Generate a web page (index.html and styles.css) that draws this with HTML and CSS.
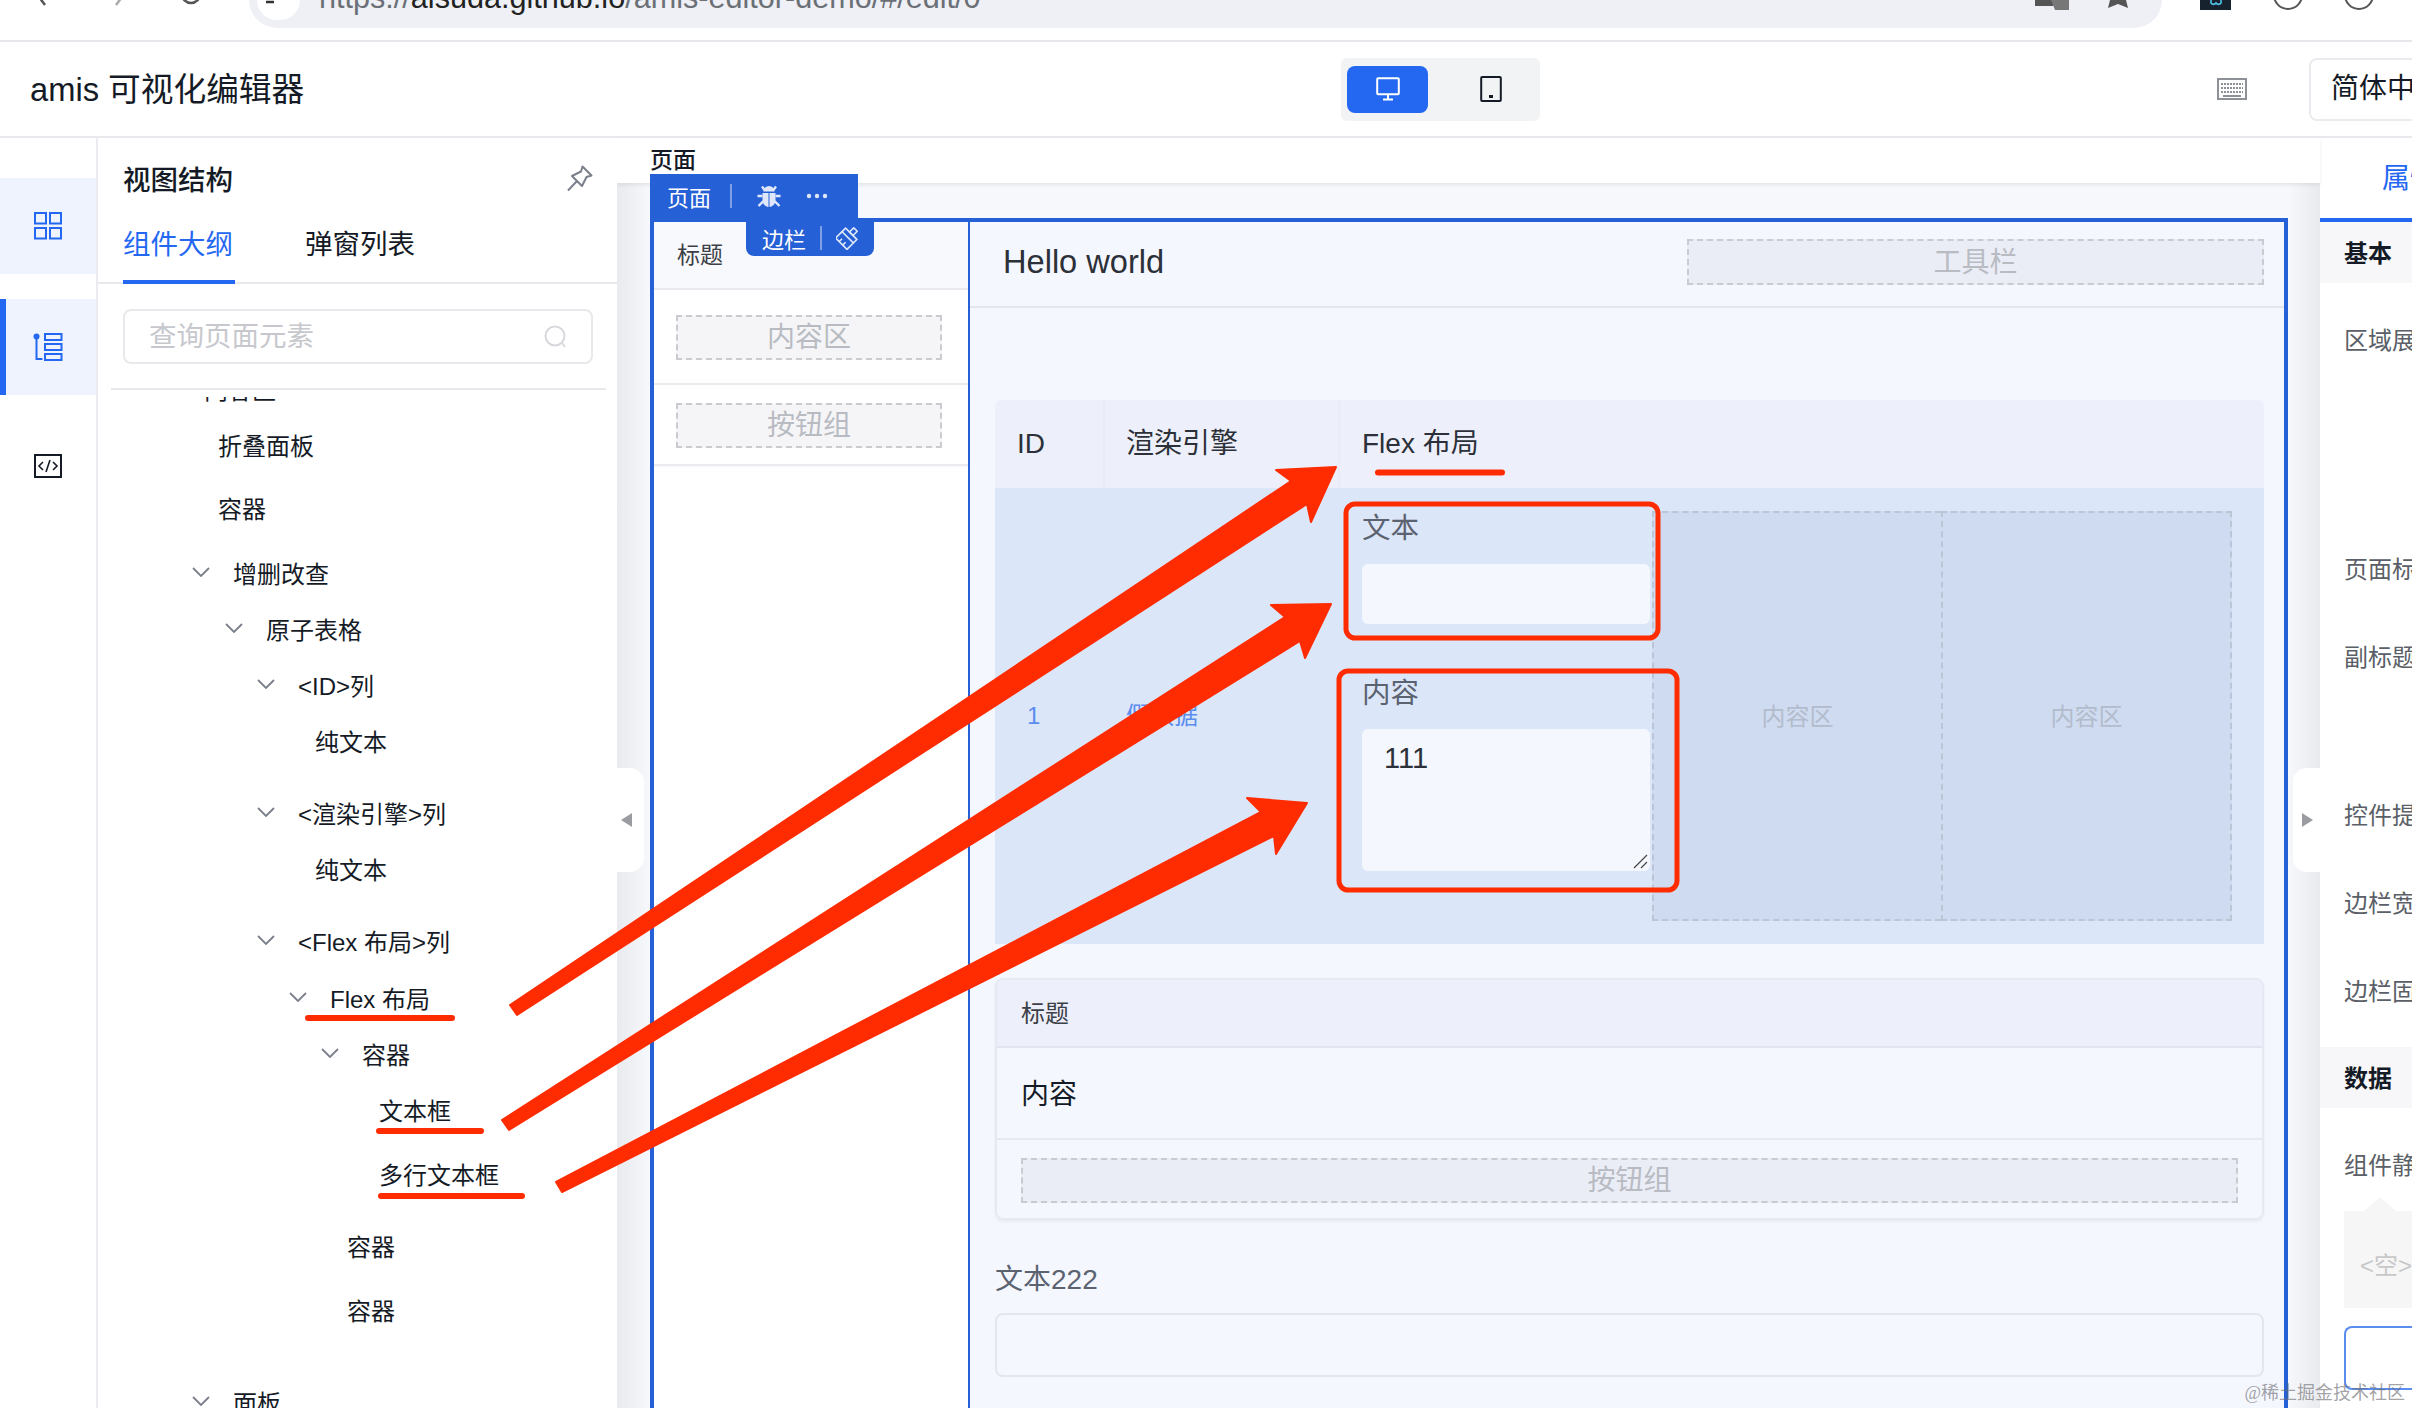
FILE: index.html
```html
<!DOCTYPE html>
<html lang="zh-CN">
<head>
<meta charset="utf-8">
<title>amis 可视化编辑器</title>
<link rel="stylesheet" href="styles.css">
</head>
<body>
<div class="browser">
  <svg class="b-back" width="10" height="6" viewBox="0 0 10 6"><path d="M2 -3L8 5" fill="none" stroke="#555" stroke-width="2.5"/></svg>
  <svg class="b-fwd" width="10" height="6" viewBox="0 0 10 6"><path d="M8 -3L2 5" fill="none" stroke="#aaa" stroke-width="2.5"/></svg>
  <svg class="b-reload" width="22" height="7" viewBox="0 0 22 7"><path d="M2 -6a9 9 0 0 0 18 0" fill="none" stroke="#555" stroke-width="2.5"/></svg>
  <div class="address">
    <div class="addr-lock"><svg width="24" height="8" viewBox="0 0 24 8"><path d="M0 2h8M14 -4a5 7 0 0 0 8 0" fill="none" stroke="#333" stroke-width="2.5"/></svg></div>
    <div class="url">https://<b>aisuda.github.io</b>/amis-editor-demo/#/edit/0</div>
    <svg class="addr-translate" width="34" height="11" viewBox="0 0 34 11"><path d="M0 0h18v6H0z" fill="#555"/><path d="M16 0h18v10H20z" fill="#777"/></svg>
    <svg class="addr-star" width="22" height="9" viewBox="0 0 22 9"><path d="M3 0l-2 8 10-4 10 4-2-8z" fill="#555"/></svg>
  </div>
  <div class="b-ext"><svg width="20" height="10" viewBox="0 0 20 10"><path d="M5 0v3a3 3 0 0 0 5 0 3 3 0 0 0 5 0V0" fill="none" stroke="#4fc3e8" stroke-width="1.6"/></svg></div>
  <svg class="b-circle b-circle-a" width="32" height="11" viewBox="0 0 32 11"><circle cx="16" cy="-5" r="14" fill="#fff" stroke="#555" stroke-width="2"/></svg>
  <svg class="b-circle b-circle-b" width="32" height="11" viewBox="0 0 32 11"><circle cx="16" cy="-5" r="14" fill="#fff" stroke="#555" stroke-width="2"/></svg>
</div>

<header class="hdr">
  <div class="hdr-title">amis 可视化编辑器</div>
  <div class="device">
    <div class="device-btn device-on">
      <svg width="24" height="24" viewBox="0 0 24 24"><rect x="1.2" y="1.2" width="21.6" height="16" rx="1" fill="none" stroke="#fff" stroke-width="2"/><path d="M12 17v5M7 22.5h10" stroke="#fff" stroke-width="2"/></svg>
    </div>
    <div class="device-btn">
      <svg width="22" height="26" viewBox="0 0 22 26"><rect x="1.2" y="1" width="19.6" height="24" rx="1" fill="none" stroke="#151b26" stroke-width="2"/><rect x="9" y="19" width="4" height="3" fill="#151b26"/></svg>
    </div>
  </div>
  <svg class="kbd" width="30" height="22" viewBox="0 0 30 22"><rect x="1" y="1" width="28" height="20" fill="none" stroke="#8d9097" stroke-width="2"/><path d="M4 6h22M4 10h22M4 14h22" stroke="#8d9097" stroke-width="2" stroke-dasharray="2 1"/><path d="M6 18h18" stroke="#8d9097" stroke-width="2"/></svg>
  <div class="lang">简体中文</div>
</header>

<div class="work">
  <nav class="rail">
    <div class="rail-item rail-on rail-first">
      <svg width="28" height="28" viewBox="0 0 28 28"><g fill="none" stroke="#2468f2" stroke-width="2"><rect x="1" y="1" width="11" height="10.5"/><rect x="16" y="1" width="11" height="10.5"/><rect x="1" y="16" width="11" height="10.5"/><rect x="16" y="16" width="11" height="10.5"/></g></svg>
    </div>
    <div class="rail-item rail-on rail-bar">
      <svg width="30" height="28" viewBox="0 0 30 28"><circle cx="3.5" cy="3.5" r="3" fill="#2468f2"/><g fill="none" stroke="#2468f2" stroke-width="2"><path d="M3.5 5v21h6"/><rect x="12" y="1" width="16.5" height="6"/><rect x="12" y="11" width="16.5" height="6"/><rect x="12" y="21" width="16.5" height="6"/></g></svg>
    </div>
    <div class="rail-item rail-code">
      <svg width="28" height="24" viewBox="0 0 28 24"><g fill="none" stroke="#151b26" stroke-width="2"><rect x="1" y="1" width="26" height="22"/><path d="M9 8l-4 4 4 4M19 8l4 4-4 4M16 6l-4 12" stroke-width="1.6"/></g></svg>
    </div>
  </nav>

  <aside class="outline">
    <div class="outline-head">
      <div class="outline-title">视图结构</div>
      <svg class="pin" width="27" height="27" viewBox="0 0 27 27"><g fill="none" stroke="#7a7f8a" stroke-width="2" stroke-linejoin="round"><path d="M16.500 1.500L25.500 10.500 20.500 12 16 21 6 11 15 6.500z"/><path d="M11 16L2 25.500"/></g></svg>
    </div>
    <div class="tabs">
      <div class="tab tab-on">组件大纲</div>
      <div class="tab tab-off">弹窗列表</div>
    </div>
    <div class="search">
      <input class="search-input" placeholder="查询页面元素">
      <svg width="26" height="26" viewBox="0 0 26 26"><circle cx="12" cy="12" r="9.500" fill="none" stroke="#d6d8dc" stroke-width="2"/><path d="M19 19l3 4" stroke="#d6d8dc" stroke-width="2"/></svg>
    </div>
    <div class="tree-wrap">
      <div class="tree">
        <div class="row p93 r-first">内容区</div>
        <div class="row p107">折叠面板</div>
        <div class="row p107 m7">容器</div>
        <div class="row p81 m9"><svg class="chev" width="18" height="10" viewBox="0 0 18 10"><path d="M1 1l8 8 8-8"/></svg>增删改查</div>
        <div class="row p114"><svg class="chev" width="18" height="10" viewBox="0 0 18 10"><path d="M1 1l8 8 8-8"/></svg>原子表格</div>
        <div class="row p146"><svg class="chev" width="18" height="10" viewBox="0 0 18 10"><path d="M1 1l8 8 8-8"/></svg>&lt;ID&gt;列</div>
        <div class="row p204">纯文本</div>
        <div class="row p146 m16"><svg class="chev" width="18" height="10" viewBox="0 0 18 10"><path d="M1 1l8 8 8-8"/></svg>&lt;渲染引擎&gt;列</div>
        <div class="row p204">纯文本</div>
        <div class="row p146 m16"><svg class="chev" width="18" height="10" viewBox="0 0 18 10"><path d="M1 1l8 8 8-8"/></svg>&lt;Flex 布局&gt;列</div>
        <div class="row p178 m1"><svg class="chev" width="18" height="10" viewBox="0 0 18 10"><path d="M1 1l8 8 8-8"/></svg>Flex 布局</div>
        <div class="row p210"><svg class="chev" width="18" height="10" viewBox="0 0 18 10"><path d="M1 1l8 8 8-8"/></svg>容器</div>
        <div class="row p268">文本框</div>
        <div class="row p268 m8">多行文本框</div>
        <div class="row p236 m16">容器</div>
        <div class="row p236 m8">容器</div>
        <div class="row p81 m36"><svg class="chev" width="18" height="10" viewBox="0 0 18 10"><path d="M1 1l8 8 8-8"/></svg>面板</div>
      </div>
    </div>
    <div class="handle handle-left"><span class="tri tri-left"></span></div>
  </aside>

  <main class="canvas">
    <div class="crumb">页面</div>
    <div class="stage">
      <div class="frame">
        <div class="tool tool-page">
          <span>页面</span><i class="tool-sep"></i>
          <svg class="tool-bug" width="24" height="24" viewBox="0 0 24 24" fill="#dfe8fb"><path d="M6.500 7.500a5.500 5.500 0 0 1 11 0z"/><path d="M5.500 9h6v14C8 22.500 5.500 20 5.500 15.500zM18.500 9h-6v14c3.500-.5 6-3 6-7.500z"/><path d="M5 2.500l3 4M19 2.500l-3 4M0.500 12h5M23.500 12h-5M1.500 22l5-5M22.500 22l-5-5" stroke="#dfe8fb" stroke-width="2.400"/></svg>
          <svg class="tool-dots" width="22" height="6" viewBox="0 0 22 6" fill="#dfe8fb"><circle cx="3" cy="3" r="2.200"/><circle cx="11" cy="3" r="2.200"/><circle cx="19" cy="3" r="2.200"/></svg>
        </div>
        <div class="tool tool-side">
          <span>边栏</span><i class="tool-sep tool-sep-b"></i>
          <svg width="22" height="24" viewBox="0 0 22 24" fill="none" stroke="#dfe8fb" stroke-width="1.600" stroke-linejoin="round"><g transform="rotate(45 11 12)"><rect x="8.500" y="0" width="5" height="6"/><rect x="3" y="6" width="16" height="5"/><path d="M3 11v9h16v-9M8 20v-4M13 20v-4"/></g></svg>
        </div>

        <section class="side">
          <div class="side-head">标题</div>
          <div class="side-block"><div class="ph">内容区</div></div>
          <div class="side-block side-foot"><div class="ph">按钮组</div></div>
        </section>

        <section class="page">
          <div class="page-head">
            <div class="page-title">Hello world</div>
            <div class="ph ph-toolbar">工具栏</div>
          </div>
          <div class="page-body">
            <div class="tbl-head">
              <div class="th">ID</div>
              <div class="th">渲染引擎</div>
              <div class="th">Flex 布局</div>
            </div>
            <div class="tbl-row">
              <div class="td td-link">1</div>
              <div class="td td-link">假数据</div>
              <div class="flex-cell">
                <div class="form-col">
                  <div class="lbl">文本</div>
                  <input class="field field-gap">
                  <div class="lbl">内容</div>
                  <div class="area">111
                    <svg class="grip" width="16" height="16" viewBox="0 0 16 16"><path d="M15 2L2 15M15 9l-6 6" stroke="#444" stroke-width="1.200"/></svg>
                  </div>
                </div>
                <div class="cont">内容区</div>
                <div class="cont cont-b">内容区</div>
              </div>
            </div>
            <div class="panel">
              <div class="panel-head">标题</div>
              <div class="panel-body">内容</div>
              <div class="panel-foot"><div class="ph">按钮组</div></div>
            </div>
            <div class="lbl lbl-222">文本222</div>
            <input class="field field-222">
          </div>
        </section>
      </div>
    </div>
    <div class="handle handle-right"><span class="tri tri-right"></span></div>
  </main>

  <aside class="props">
    <div class="props-tab">属性</div>
    <div class="sec">基本</div>
    <div class="pf pf-34">区域展示</div>
    <div class="pf pf-183">页面标题</div>
    <div class="pf pf-42">副标题</div>
    <div class="pf pf-112">控件提示</div>
    <div class="pf pf-42">边栏宽度</div>
    <div class="pf pf-42">边栏固定</div>
    <div class="sec sec-data">数据</div>
    <div class="pf pf-34">组件静态数据</div>
    <div class="empty">&lt;空&gt;</div>
    <div class="add-btn"></div>
  </aside>
</div>

<svg class="marks" width="2412" height="1408" viewBox="0 0 2412 1408">
  <g fill="none" stroke="#fe2c00" stroke-linecap="round">
    <path d="M308 1018H452M379 1131H481M381 1196H522M1378 472.500H1502" stroke-width="6"/>
    <rect x="1346" y="504" width="312" height="134" rx="9" stroke-width="5"/>
    <rect x="1339" y="671" width="338" height="219" rx="9" stroke-width="5"/>
  </g>
  <g fill="#fe2c00" stroke="#fe2c00" stroke-width="2" stroke-linejoin="round">
    <polygon points="510,1005 1291,481 1276,470 1336,467 1311,522 1307,504 517,1015"/>
    <polygon points="502,1120 1285,617 1271,605 1331,604 1305,658 1300,641 509,1130"/>
    <polygon points="556,1182 1261,812 1247,798 1307,803 1276,854 1274,836 562,1192"/>
  </g>
</svg>
<div class="watermark">@稀土掘金技术社区</div>
</body>
</html>
```
FILE: styles.css
```css
* { box-sizing: border-box; }
html, body { margin: 0; height: 1408px; overflow: hidden; }
body {
  position: relative;
  background: #fff;
  color: #151b26;
  font-family: "Liberation Sans", "Noto Sans CJK SC", sans-serif;
  font-size: 24px;
}

/* browser chrome */
.browser { height: 42px; display: flex; align-items: flex-start; border-bottom: 2px solid #e6e7ea; }
.browser svg { display: block; flex: none; }
.b-back { margin-left: 37px; }
.b-fwd { margin-left: 67px; }
.b-reload { margin-left: 56px; }
.address { margin-left: 47px; width: 1913px; height: 28px; background: #eef0f5; border-radius: 0 0 28px 28px; display: flex; align-items: flex-start; overflow: hidden; }
.addr-lock { margin-left: 8px; width: 43px; height: 20px; background: #fff; border-radius: 0 0 20px 20px; padding-left: 9px; flex: none; }
.url { margin: -17px 0 0 19px; font-size: 30.600px; line-height: 28px; color: #6b6f76; white-space: nowrap; width: 1478px; }
.url b { font-weight: 400; color: #222; }
.addr-translate { margin-left: 238px; }
.addr-star { margin-left: 38px; }
.b-ext { margin-left: 38px; width: 31px; height: 10px; background: #16222e; display: flex; justify-content: center; flex: none; }
.b-circle-a { margin-left: 41px; }
.b-circle-b { margin-left: 39px; }

/* editor header */
.hdr { height: 96px; display: flex; align-items: center; border-bottom: 2px solid #e8e9ec; }
.hdr-title { flex: 0 0 1341px; padding: 0 0 6px 30px; font-size: 32.700px; }
.device { width: 199px; height: 63px; background: #f2f3f5; border-radius: 6px; padding: 8px 6px; display: flex; gap: 22px; }
.device-btn { width: 81px; height: 47px; border-radius: 8px; display: flex; align-items: center; justify-content: center; }
.device-on { background: #2468f2; }
.kbd { margin-left: 677px; flex: none; }
.lang { margin-left: 62px; flex: 1; height: 63px; min-width: 0; overflow: hidden; white-space: nowrap; border: 2px solid #eaebee; border-right: 0; border-radius: 8px 0 0 8px; padding-left: 20px; font-size: 28px; line-height: 58px; }

/* three columns */
.work { display: flex; height: 1270px; }
.rail { flex: 0 0 98px; border-right: 2px solid #ececf0; }
.rail-item { height: 96px; display: flex; align-items: center; justify-content: center; margin-top: 25px; }
.rail-first { margin-top: 40px; }
.rail-code { margin-top: 23px; }
.rail-on { background: #eef3fe; }
.rail-bar { border-left: 6px solid #2468f2; padding-right: 6px; }

.outline { flex: 0 0 519px; position: relative; z-index: 2; background: #fff; }
.outline-head { height: 77px; padding: 26px 24px 0 25px; display: flex; justify-content: space-between; align-items: flex-start; }
.pin { margin-top: 1px; }
.outline-title { font-size: 27.500px; font-weight: 500; line-height: 34px; }
.tabs { height: 69px; padding-left: 25px; display: flex; gap: 70px; border-bottom: 2px solid #e8e9ec; }
.tab { width: 112px; font-size: 27.500px; line-height: 60px; white-space: nowrap; height: 69px; }
.tab-on { color: #2468f2; border-bottom: 4px solid #2468f2; }
.search { margin: 25px 24px 0 25px; height: 55px; border: 2px solid #e8e9ec; border-radius: 8px; display: flex; align-items: center; padding: 0 22px 0 24px; }
.search-input { flex: 1; min-width: 0; border: 0; outline: 0; padding: 0; background: none; font: inherit; font-size: 27.500px; }
.search-input::placeholder { color: #c6c8cd; }
.tree-wrap { margin: 24px 11px 0 13px; border-top: 2px solid #e8e9ec; }
.tree { margin-top: 7px; height: 1011px; overflow: hidden; font-size: 24px; white-space: nowrap; }
.row { height: 56px; display: flex; align-items: center; }
.r-first { margin-top: -37px; }
.chev { margin-right: 23px; flex: none; }
.chev path { fill: none; stroke: #7a7f8a; stroke-width: 1.800; }
.p81 { padding-left: 81px; } .p93 { padding-left: 93px; } .p107 { padding-left: 107px; } .p114 { padding-left: 114px; }
.p146 { padding-left: 146px; } .p178 { padding-left: 178px; } .p204 { padding-left: 204px; }
.p210 { padding-left: 210px; } .p236 { padding-left: 236px; } .p268 { padding-left: 268px; }
.m1 { margin-top: 1px; } .m7 { margin-top: 7px; } .m8 { margin-top: 8px; } .m9 { margin-top: 9px; }
.m16 { margin-top: 16px; } .m36 { margin-top: 36px; }

.handle { position: absolute; top: 630px; width: 27px; height: 104px; background: #fff; display: flex; align-items: center; justify-content: center; z-index: 3; }
.handle-left { left: 519px; border-radius: 0 14px 14px 0; padding-right: 9px; }
.handle-right { right: 0; border-radius: 14px 0 0 14px; padding-left: 2px; }
.tri { width: 0; height: 0; border-style: solid; border-color: transparent; }
.tri-left { border-width: 7px 11px 7px 0; border-right-color: #9a9ca1; }
.tri-right { border-width: 7px 0 7px 11px; border-left-color: #9a9ca1; }

/* canvas */
.canvas { flex: 0 0 1703px; position: relative; display: flex; flex-direction: column; min-width: 0; }
.crumb { height: 45px; background: #fff; padding: 9px 0 0 33px; font-size: 23px; line-height: 26px; font-weight: 500; box-shadow: 0 2px 4px rgba(0,0,0,.08); position: relative; }
.stage { flex: 1; min-height: 0; padding: 35px 32px 0 33px; background: linear-gradient(to right, #e9eaee 0, #f7f8fb 33px, #f7f8fb calc(100% - 32px), #e9eaee 100%); }
.frame { position: relative; height: 100%; display: flex; border: 4px solid #2660d6; border-bottom: 0; }

.tool { position: absolute; z-index: 4; background: #2660d6; color: #fff; font-size: 22px; display: flex; align-items: center; }
.tool-page { left: -4px; top: -48px; width: 208px; height: 44px; padding-left: 17px; }
.tool-side { left: 92px; top: 0; width: 128px; height: 34px; padding: 0 0 3px 16px; border-radius: 0 0 8px 8px; }
.tool-sep { width: 2px; height: 24px; background: #7ea0e6; margin: 0 25px 0 19px; flex: none; }
.tool-sep-b { margin: 0 14px; }
.tool-dots { margin-left: 25px; }

.side { flex: 0 0 316px; background: #fff; border-right: 2px solid #2660d6; }
.side-head { height: 68px; padding-left: 23px; background: #f8f9fc; border-bottom: 2px solid #e9ebef; line-height: 66px; color: #3c4048; font-size: 23px; }
.side-block { height: 95px; padding: 25px 26px 0 22px; border-bottom: 2px solid #e9ebef; }
.side-foot { height: 81px; padding-top: 18px; box-shadow: 0 1px 2px rgba(0,0,0,.04); }
.ph { height: 45px; border: 2px dashed #c9cbd1; background: rgba(20,30,60,.045); color: #b8bbc2; font-size: 28px; line-height: 42px; text-align: center; }

.page { flex: 1; min-width: 0; background: #f5f7fe; }
.page-head { height: 86px; padding: 17px 20px 0 33px; display: flex; justify-content: space-between; border-bottom: 2px solid #e4e6ec; }
.page-title { font-size: 32.600px; line-height: 46px; color: #2c3038; }
.ph-toolbar { width: 577px; height: 46px; line-height: 44px; }
.page-body { padding: 92px 20px 0 25px; }

.tbl-head { height: 88px; background: #edf0fa; display: grid; grid-template-columns: 108px 235px 1fr; border-radius: 6px 6px 0 0; }
.th { font-size: 28px; line-height: 88px; padding-left: 21px; color: #2c3038; }
.th:first-child { padding-left: 22px; }
.th:last-child { padding-left: 22px; }
.th + .th { border-left: 2px solid #e9ecf6; }
.tbl-row { height: 456px; background: #dce6f9; display: grid; grid-template-columns: 108px 235px 1fr; }
.td { font-size: 24px; padding-left: 32px; line-height: 456px; }
.td-link { color: #5b8def; }
.td-link + .td-link { padding-left: 23px; }
.flex-cell { display: flex; padding: 23px 32px 23px 24px; }
.form-col { flex: 0 0 290px; }
.lbl { height: 34px; font-size: 28.500px; line-height: 34px; color: #5b6270; }
.field { display: block; width: 288px; height: 60px; margin-top: 19px; border: 0; outline: 0; padding: 0; border-radius: 6px; background: #f5f7fe; }
.field-gap { margin-bottom: 52px; }
.area { position: relative; width: 288px; height: 142px; margin-top: 19px; border-radius: 6px; background: #f5f7fe; padding: 12px 22px; font-size: 29px; line-height: 34px; color: #2c3038; }
.grip { position: absolute; right: 2px; bottom: 2px; }
.cont { flex: 1; display: flex; align-items: center; justify-content: center; padding-bottom: 4px; background: #cfdbf0; border: 2px dashed #bcc5d6; border-right: 0; color: #b3bccc; font-size: 24px; }
.cont-b { border-right: 2px dashed #bcc5d6; }

.panel { margin-top: 34px; height: 242px; border: 2px solid #e6e9f1; border-radius: 8px; box-shadow: 0 2px 3px rgba(0,0,0,.05); overflow: hidden; }
.panel-head { height: 68px; background: #edf0fa; border-bottom: 2px solid #e2e5ee; padding-left: 24px; line-height: 68px; color: #3c4048; font-size: 24px; }
.panel-body { height: 92px; padding-left: 24px; font-size: 28px; line-height: 94px; border-bottom: 2px solid #e6e9f1; }
.panel-foot { padding: 18px 24px 0; }
.lbl-222 { margin-top: 43px; font-size: 28px; }
.field-222 { width: 100%; height: 64px; background: transparent; border: 2px solid #e4e6ee; border-radius: 8px; margin-top: 16px; }

/* right panel */
.props { flex: 1; min-width: 0; overflow: hidden; white-space: nowrap; background: #fff; font-size: 24px; }
.props-tab { height: 84px; padding: 23px 0 0 62px; border-bottom: 4px solid #2468f2; color: #2468f2; font-size: 28px; line-height: 36px; }
.sec { height: 61px; background: #f7f7f9; padding-left: 24px; font-weight: 700; line-height: 64px; }
.sec-data { margin-top: 34px; }
.pf { height: 46px; padding-left: 24px; line-height: 50px; color: #5b5f67; }
.pf-34 { margin-top: 33px; } .pf-42 { margin-top: 42px; } .pf-112 { margin-top: 112px; } .pf-183 { margin-top: 183px; }
.empty { position: relative; margin: 24px 0 0 24px; height: 97px; background: #f6f6f7; padding-left: 16px; color: #c8c8c8; line-height: 110px; }
.empty::before { content: ""; position: absolute; left: 20px; top: -14px; border-style: solid; border-width: 0 16px 14px; border-color: transparent transparent #f6f6f7; }
.add-btn { margin: 18px 0 0 24px; height: 64px; border: 2px solid #5b8def; border-right: 0; border-radius: 8px 0 0 8px; }

/* annotations */
.marks { position: absolute; left: 0; top: 0; z-index: 10; pointer-events: none; }
.watermark { position: absolute; right: 7px; bottom: 4px; z-index: 11; font-family: "Liberation Serif", "Noto Sans CJK SC", serif; font-size: 18px; color: rgba(110,110,115,.65); white-space: nowrap; }
```
